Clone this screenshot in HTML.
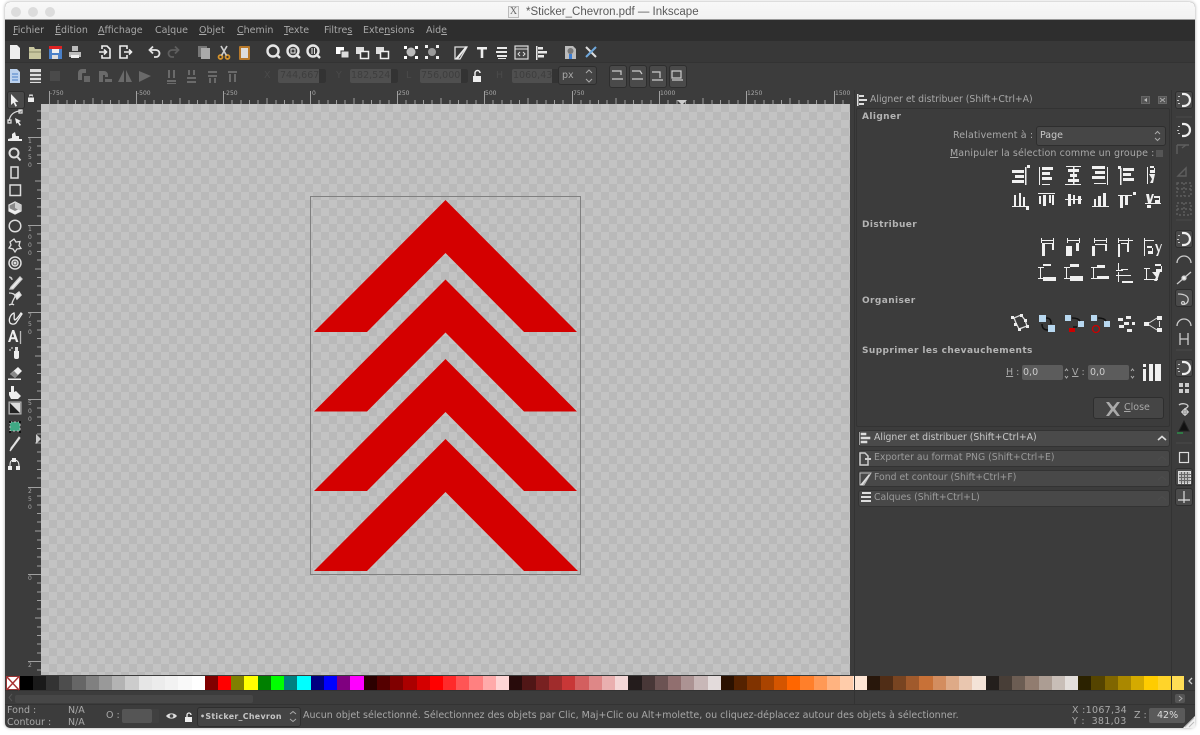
<!DOCTYPE html>
<html lang="fr"><head><meta charset="utf-8"><title>Inkscape</title>
<style>
html,body{margin:0;padding:0;width:1200px;height:735px;background:#fff;overflow:hidden}
*{box-sizing:border-box}
#w{position:absolute;left:5px;top:2px;width:1190px;height:726px;background:#3c3c3c;border-radius:5px;overflow:hidden;box-shadow:0 0 3px rgba(0,0,0,.35)}
.a{position:absolute}
.t{position:absolute;font:9.5px/12px "DejaVu Sans",sans-serif;color:#a8a8a8;white-space:nowrap;filter:blur(.25px)}
.b{font-weight:bold;font-size:9px;color:#b4b4b4;letter-spacing:.4px}
.sp{position:absolute;background:#4f4f4f;border-radius:2px}
.st{position:absolute;background:#333;border-radius:0 2px 2px 0}
.btn{position:absolute;background:#4a4a4a;border:1px solid #2e2e2e;border-radius:3px}
.tab{position:absolute;left:858px;width:312px;height:17px;background:#484848;border:1px solid #333;border-radius:3px}
.tl{font-size:9.3px}
svg{position:absolute;left:0;top:0}
#ic{filter:blur(.3px)}
#pal{position:absolute;left:19.5px;top:676px;width:1164.5px;height:14px;display:flex}
#pal i{flex:1 1 0;display:block}
</style></head><body>
<div id="w"></div>
<!-- title bar -->
<div class="a" style="left:5px;top:2px;width:1190px;height:18px;background:linear-gradient(#f8f8f8,#f2f2f2);border-radius:5px 5px 0 0;border-bottom:1px solid #999"></div>
<div class="a" style="left:11px;top:7px;width:10px;height:10px;border-radius:5px;background:#dcdcdc"></div>
<div class="a" style="left:28px;top:7px;width:10px;height:10px;border-radius:5px;background:#dcdcdc"></div>
<div class="a" style="left:45px;top:7px;width:10px;height:10px;border-radius:5px;background:#dcdcdc"></div>
<div class="a" style="left:508px;top:6px;width:11px;height:12px;background:#eee;border:1px solid #bbb;font:10px/10px 'Liberation Serif',serif;color:#666;text-align:center">X</div>
<div class="t" style="left:526px;top:6px;font:11.5px/13px 'Liberation Sans',sans-serif;color:#5a5a5a">*Sticker_Chevron.pdf — Inkscape</div>
<!-- menu -->
<div class="a" style="left:5px;top:20px;width:1190px;height:21px;background:#2e2e2e"></div>
<div class="a" style="left:5px;top:41px;width:1190px;height:21px;background:#383838"></div>
<div class="a" style="left:5px;top:62px;width:1190px;height:1px;background:#333"></div>
<div class="t" style="left:13px;top:25px"><u>F</u>ichier</div>
<div class="t" style="left:55px;top:25px"><u>É</u>dition</div>
<div class="t" style="left:98px;top:25px"><u>A</u>ffichage</div>
<div class="t" style="left:155px;top:25px">Ca<u>l</u>que</div>
<div class="t" style="left:199px;top:25px"><u>O</u>bjet</div>
<div class="t" style="left:237px;top:25px"><u>C</u>hemin</div>
<div class="t" style="left:284px;top:25px"><u>T</u>exte</div>
<div class="t" style="left:324px;top:25px">Filtre<u>s</u></div>
<div class="t" style="left:363px;top:25px">Exte<u>n</u>sions</div>
<div class="t" style="left:426px;top:25px">Aid<u>e</u></div>
<!-- tool controls -->
<div class="sp" style="left:278px;top:69px;width:48px;height:14px"></div><div class="st" style="left:319px;top:69px;width:7px;height:14px"></div>
<div class="sp" style="left:350px;top:69px;width:48px;height:14px"></div><div class="st" style="left:391px;top:69px;width:7px;height:14px"></div>
<div class="sp" style="left:420px;top:69px;width:48px;height:14px"></div><div class="st" style="left:461px;top:69px;width:7px;height:14px"></div>
<div class="sp" style="left:512px;top:69px;width:47px;height:14px"></div><div class="st" style="left:552px;top:69px;width:7px;height:14px"></div>
<div class="t" style="left:280px;top:70px;color:#3e3e3e">744,667</div>
<div class="t" style="left:351px;top:70px;color:#3e3e3e">182,524</div>
<div class="t" style="left:421px;top:70px;color:#3e3e3e">756,000</div>
<div class="t" style="left:513px;top:70px;color:#3e3e3e">1060,43</div>
<div class="t" style="left:264px;top:70px;color:#4a4a4a">X</div>
<div class="t" style="left:336px;top:70px;color:#4a4a4a">Y</div>
<div class="t" style="left:406px;top:70px;color:#4a4a4a">L</div>
<div class="t" style="left:496px;top:70px;color:#4a4a4a">H</div>
<div class="btn" style="left:558px;top:66px;width:39px;height:19px;background:#444"></div>
<div class="t" style="left:562px;top:70px">px</div>
<div class="btn" style="left:609px;top:65px;width:18px;height:23px"></div>
<div class="btn" style="left:629px;top:65px;width:18px;height:23px"></div>
<div class="btn" style="left:649px;top:65px;width:18px;height:23px"></div>
<div class="btn" style="left:669px;top:65px;width:18px;height:23px"></div>
<!-- selected tool -->
<div class="btn" style="left:7px;top:91px;width:18px;height:18px"></div>
<!-- rulers -->
<div class="a" style="left:41px;top:90px;width:809px;height:14px;background:#3c3c3c"></div>
<!-- canvas -->
<div class="a" style="left:41px;top:104px;width:809px;height:571px;background:repeating-conic-gradient(#b9b9b9 0 25%,#c3c3c3 0 50%) 0 0/16px 16px"></div>
<!-- palette -->
<div id="pal"><i style="background:#000"></i><i style="background:#1a1a1a"></i><i style="background:#333"></i><i style="background:#4d4d4d"></i><i style="background:#666"></i><i style="background:#808080"></i><i style="background:#999"></i><i style="background:#b3b3b3"></i><i style="background:#ccc"></i><i style="background:#e6e6e6"></i><i style="background:#ececec"></i><i style="background:#f2f2f2"></i><i style="background:#f9f9f9"></i><i style="background:#fff"></i><i style="background:#800000"></i><i style="background:#f00"></i><i style="background:#808000"></i><i style="background:#ff0"></i><i style="background:#008000"></i><i style="background:#0f0"></i><i style="background:#008080"></i><i style="background:#0ff"></i><i style="background:#000080"></i><i style="background:#00f"></i><i style="background:#800080"></i><i style="background:#f0f"></i><i style="background:#2b0000"></i><i style="background:#500"></i><i style="background:#800000"></i><i style="background:#a00"></i><i style="background:#d40000"></i><i style="background:#f00"></i><i style="background:#ff2a2a"></i><i style="background:#f55"></i><i style="background:#ff8080"></i><i style="background:#faa"></i><i style="background:#ffd5d5"></i><i style="background:#280b0b"></i><i style="background:#501616"></i><i style="background:#782121"></i><i style="background:#a02c2c"></i><i style="background:#c83737"></i><i style="background:#d35f5f"></i><i style="background:#de8787"></i><i style="background:#e9afaf"></i><i style="background:#f4d7d7"></i><i style="background:#241c1c"></i><i style="background:#483737"></i><i style="background:#6c5353"></i><i style="background:#916f6f"></i><i style="background:#ac9393"></i><i style="background:#c8b7b7"></i><i style="background:#e3dbdb"></i><i style="background:#2b1100"></i><i style="background:#520"></i><i style="background:#803300"></i><i style="background:#a40"></i><i style="background:#d45500"></i><i style="background:#f60"></i><i style="background:#ff7f2a"></i><i style="background:#f95"></i><i style="background:#ffb380"></i><i style="background:#fca"></i><i style="background:#ffe6d5"></i><i style="background:#28170b"></i><i style="background:#502d16"></i><i style="background:#784421"></i><i style="background:#a05a2c"></i><i style="background:#c87137"></i><i style="background:#d38d5f"></i><i style="background:#deaa87"></i><i style="background:#e9c6af"></i><i style="background:#f4e3d7"></i><i style="background:#241f1c"></i><i style="background:#483e37"></i><i style="background:#6c5d53"></i><i style="background:#917c6f"></i><i style="background:#ac9d93"></i><i style="background:#c8beb7"></i><i style="background:#e3dedb"></i><i style="background:#2b2200"></i><i style="background:#540"></i><i style="background:#806600"></i><i style="background:#a80"></i><i style="background:#d4aa00"></i><i style="background:#fc0"></i><i style="background:#ffd42a"></i><i style="background:#fd5"></i></div>
<div class="a" style="left:6px;top:676px;width:13.5px;height:14px;background:#fff"></div>
<!-- scrollbar + status -->
<div class="a" style="left:5px;top:690px;width:1190px;height:1px;background:#333"></div>
<div class="a" style="left:15px;top:695px;width:238px;height:8px;background:#474747;border-radius:2px"></div>
<div class="a" style="left:5px;top:704px;width:1190px;height:1px;background:#333"></div>
<div class="t" style="left:7px;top:705px;line-height:12px">Fond :<br>Contour :</div>
<div class="t" style="left:68px;top:705px;line-height:12px">N/A<br>N/A</div>
<div class="t" style="left:106px;top:710px">O :</div>
<div class="sp" style="left:122px;top:709px;width:30px;height:14px;background:#555"></div><div class="st" style="left:152px;top:709px;width:7px;height:14px;background:#404040"></div>
<div class="btn" style="left:197px;top:707px;width:104px;height:20px;background:#444"></div>
<div class="t b" style="left:200px;top:711px;color:#c6c6c6;font-size:7.9px;letter-spacing:.3px">•Sticker_Chevron</div>
<div class="t" style="left:303px;top:710px;letter-spacing:.012px">Aucun objet sélectionné. Sélectionnez des objets par Clic, Maj+Clic ou Alt+molette, ou cliquez-déplacez autour des objets à sélectionner.</div>
<div class="t" style="left:1072px;top:705px;letter-spacing:.3px">X :1067,34</div>
<div class="t" style="left:1072px;top:716px;letter-spacing:.3px">Y :&nbsp;&nbsp;381,03</div>
<div class="t" style="left:1134px;top:710px">Z :</div>
<div class="sp" style="left:1149px;top:708px;width:36px;height:15px;background:#5a5a5a"></div>
<div class="t" style="left:1157px;top:710px;color:#ddd">42%</div>
<!-- right dock -->
<div class="a" style="left:854px;top:90px;width:1px;height:614px;background:#333"></div>
<div class="a" style="left:1171px;top:90px;width:1px;height:614px;background:#333"></div>
<div class="a" style="left:856px;top:108px;width:314px;height:319px;border:1px solid #333;border-radius:2px"></div>
<div class="t tl" style="left:870px;top:94px">Aligner et distribuer (Shift+Ctrl+A)</div>
<div class="t b" style="left:862px;top:111px">Aligner</div>
<div class="t" style="left:953px;top:130px;letter-spacing:.12px">Relativement à :</div>
<div class="btn" style="left:1036px;top:126px;width:130px;height:20px;background:#464646"></div>
<div class="t" style="left:1040px;top:130px;color:#c8c8c8">Page</div>
<div class="t" style="left:950px;top:148px;letter-spacing:.1px"><u>M</u>anipuler la sélection comme un groupe :</div>
<div class="a" style="left:1156px;top:150px;width:7px;height:7px;background:#555"></div>
<div class="t b" style="left:862px;top:219px">Distribuer</div>
<div class="t b" style="left:862px;top:295px">Organiser</div>
<div class="t b" style="left:862px;top:345px">Supprimer les chevauchements</div>
<div class="t" style="left:1006px;top:367px"><u>H</u> :</div>
<div class="sp" style="left:1022px;top:365px;width:41px;height:15px;background:#5c5c5c"></div>
<div class="t" style="left:1023px;top:367px;color:#ccc">0,0</div>
<div class="t" style="left:1072px;top:367px"><u>V</u> :</div>
<div class="sp" style="left:1088px;top:365px;width:41px;height:15px;background:#5c5c5c"></div>
<div class="t" style="left:1090px;top:367px;color:#ccc">0,0</div>
<div class="btn" style="left:1093px;top:397px;width:71px;height:22px;background:#454545"></div>
<div class="t" style="left:1124px;top:402px"><u>C</u>lose</div>
<div class="tab" style="top:430px;background:#4a4a4a"></div>
<div class="tab" style="top:450px"></div>
<div class="tab" style="top:470px"></div>
<div class="tab" style="top:490px"></div>
<div class="t tl" style="left:874px;top:432px;color:#c8c8c8">Aligner et distribuer (Shift+Ctrl+A)</div>
<div class="t tl" style="left:874px;top:452px;color:#9a9a9a">Exporter au format PNG (Shift+Ctrl+E)</div>
<div class="t tl" style="left:874px;top:472px;color:#9a9a9a">Fond et contour (Shift+Ctrl+F)</div>
<div class="t tl" style="left:874px;top:492px;color:#9a9a9a">Calques (Shift+Ctrl+L)</div>
<div class="btn" style="left:1175px;top:91px;width:18px;height:18px"></div>
<div class="btn" style="left:1175px;top:230px;width:18px;height:18px"></div>
<div class="btn" style="left:1175px;top:289px;width:18px;height:18px"></div>
<div class="btn" style="left:1175px;top:359px;width:18px;height:18px"></div>
<div class="btn" style="left:1175px;top:468px;width:18px;height:18px"></div>
<div class="btn" style="left:1175px;top:488px;width:18px;height:18px"></div>
<!-- ruler labels -->
<div class="t" style="left:50px;top:90px;font-size:6px;line-height:8px">-750</div>
<div class="t" style="left:137px;top:90px;font-size:6px;line-height:8px">-500</div>
<div class="t" style="left:224px;top:90px;font-size:6px;line-height:8px">-250</div>
<div class="t" style="left:312px;top:90px;font-size:6px;line-height:8px">0</div>
<div class="t" style="left:398px;top:90px;font-size:6px;line-height:8px">250</div>
<div class="t" style="left:485px;top:90px;font-size:6px;line-height:8px">500</div>
<div class="t" style="left:573px;top:90px;font-size:6px;line-height:8px">750</div>
<div class="t" style="left:660px;top:90px;font-size:6px;line-height:8px">1000</div>
<div class="t" style="left:747px;top:90px;font-size:6px;line-height:8px">1250</div>
<div class="t" style="left:835px;top:90px;font-size:6px;line-height:8px">1500</div>
<div class="t" style="left:28px;top:138px;font-size:6px;line-height:8px;width:6px">1<br>2<br>5<br>0</div>
<div class="t" style="left:28px;top:226px;font-size:6px;line-height:8px;width:6px">1<br>0<br>0<br>0</div>
<div class="t" style="left:28px;top:313px;font-size:6px;line-height:8px;width:6px">7<br>5<br>0</div>
<div class="t" style="left:28px;top:400px;font-size:6px;line-height:8px;width:6px">5<br>0<br>0</div>
<div class="t" style="left:28px;top:488px;font-size:6px;line-height:8px;width:6px">2<br>5<br>0</div>
<div class="t" style="left:28px;top:575px;font-size:6px;line-height:8px;width:6px">0</div>
<div class="t" style="left:28px;top:662px;font-size:6px;line-height:8px;width:6px">2</div>

<svg width="1200" height="735" viewBox="0 0 1200 735">
<!-- document -->
<rect x="310.5" y="196.5" width="270" height="378" fill="none" stroke="#808080"/>
<g fill="#d40000">
<path d="M445.5 200L577 332H524L445.5 253L367 332H314Z"/>
<path d="M445.5 279.5L577 411.5H524L445.5 332.5L367 411.5H314Z"/>
<path d="M445.5 359L577 491H524L445.5 412L367 491H314Z"/>
<path d="M445.5 439L578 571H524L445.5 492L367 571H314Z"/>
</g>
<!-- ruler ticks -->
<g stroke="#a0a0a0" fill="none">
<path d="M49.5 91V104M136.5 91V104M223.5 91V104M310.5 91V104M397.5 91V104M484.5 91V104M572.5 91V104M659.5 91V104M746.5 91V104M834.5 91V104"/>
<path d="M58 100V104M67 100V104M75.500 100V104M84 100V104M93 98V104M102 100V104M110.500 100V104M119 100V104M128 100V104M145 100V104M154 100V104M162.500 100V104M171 100V104M180 98V104M189 100V104M197.500 100V104M206 100V104M215 100V104M232 100V104M241 100V104M249.500 100V104M258 100V104M267 98V104M276 100V104M284.500 100V104M293 100V104M302 100V104M319 100V104M328 100V104M336.500 100V104M345 100V104M354 98V104M363 100V104M371.500 100V104M380 100V104M389 100V104M406 100V104M415 100V104M423.500 100V104M432 100V104M441 98V104M450 100V104M458.500 100V104M467 100V104M476 100V104M493 100V104M502 100V104M511 100V104M519.500 100V104M528 98V104M537 100V104M546 100V104M554.500 100V104M563 100V104M581 100V104M590 100V104M598.500 100V104M607 100V104M616 98V104M625 100V104M633.500 100V104M642 100V104M651 100V104M668 100V104M677 100V104M685.500 100V104M694 100V104M703 98V104M712 100V104M720.500 100V104M729 100V104M738 100V104M755 100V104M764 100V104M773 100V104M781.500 100V104M790 98V104M799 100V104M808 100V104M816.500 100V104M825 100V104M843 100V104"/>
<path d="M28 137.500H41M28 225.500H41M28 312.500H41M28 399.500H41M28 487.500H41M28 574.500H41M28 661.500H41"/>
<path d="M37 111H41M37 120H41M37 128.500H41M37 146H41M37 155H41M37 163.500H41M35 181H41M37 190H41M37 198.500H41M37 207H41M37 216H41M37 234H41M37 243H41M37 251.500H41M37 260H41M35 269H41M37 277.500H41M37 286H41M37 295H41M37 304H41M37 321H41M37 330H41M37 338.500H41M37 347H41M35 356H41M37 365H41M37 373.500H41M37 382H41M37 391H41M37 408H41M37 417H41M37 425.500H41M37 434H41M35 443H41M37 452H41M37 461H41M37 469.500H41M37 478H41M37 496H41M37 505H41M37 513.500H41M37 522H41M35 531H41M37 540H41M37 548.500H41M37 557H41M37 566H41M37 583H41M37 592H41M37 600.500H41M37 609H41M35 618H41M37 627H41M37 635.500H41M37 644H41M37 653H41M37 670H41"/>
</g>
<path d="M677 100h10l-5 5z" fill="#ccc"/><path d="M36 434v10l5-5z" fill="#ccc"/>
<!-- no-paint swatch -->
<path d="M6.500 676.500L19 690M19 676.500L6.500 690" stroke="#a33" stroke-width="1.500"/><rect x="6.500" y="676.500" width="13" height="13" fill="none" stroke="#933"/>
<g id="ic">
<!-- top toolbar -->
<g transform="translate(7 44)"><path d="M3 1h7l3 3v11H3z" fill="#eee"/></g>
<g transform="translate(27 44)"><path d="M2 3h5l1 2h6v10H2z" fill="#c8c69f"/><path d="M2 8h12" stroke="#8a8a6a"/></g>
<g transform="translate(47 44)"><rect x="2" y="2" width="13" height="13" fill="#4a80c8"/><rect x="2" y="2" width="13" height="3" fill="#d22"/><rect x="5" y="5" width="7" height="4" fill="#eee"/><rect x="5" y="11" width="6" height="4" fill="#ddd"/></g>
<g transform="translate(67 44)"><path d="M5 2h6v5H5zM2 8h12v5H2z" fill="#bbb"/><rect x="4" y="11" width="8" height="3" fill="#eee"/></g>
<g transform="translate(97 44)" fill="none" stroke="#eee" stroke-width="1.600"><path d="M5 5V2h5l3 3v9H5v-3"/><path d="M2 8h7M7 5.500L9.500 8L7 10.500"/></g>
<g transform="translate(117 44)" fill="none" stroke="#eee" stroke-width="1.600"><path d="M10 5V2H3v12h7v-3"/><path d="M7 8h7M12 5.500L14.500 8L12 10.500"/></g>
<g transform="translate(146 44)" fill="none" stroke="#e4e4e4" stroke-width="1.800"><path d="M4 6h6a3 3 0 0 1 0 7H8"/><path d="M7 2.500L3.500 6L7 9.500"/></g>
<g transform="translate(166 44)" fill="none" stroke="#5e5e5e" stroke-width="1.800"><path d="M12 6H6a3 3 0 0 0 0 7h2"/><path d="M9 2.500L12.500 6L9 9.500"/></g>
<g transform="translate(196 44)"><rect x="2" y="2" width="9" height="11" fill="#777"/><rect x="5" y="4" width="9" height="11" fill="#aaa"/></g>
<g transform="translate(216 44)" stroke="#d8952c" fill="none" stroke-width="1.700"><circle cx="4.500" cy="13" r="2"/><circle cx="11.500" cy="13" r="2"/><path d="M5.500 11.500L11 2M10.500 11.500L5 2" stroke="#ccc"/></g>
<g transform="translate(236 44)"><rect x="3" y="2" width="11" height="14" rx="1" fill="#b8792a"/><rect x="5" y="4" width="7" height="10" fill="#ddd"/></g>
<g fill="none" stroke="#e6e6e6" stroke-width="2.400">
<g transform="translate(265 44)"><circle cx="8" cy="7" r="5.500"/><path d="M12 11l3 3"/></g>
<g transform="translate(285 44)"><circle cx="8" cy="7" r="5.500"/><path d="M12 11l3 3"/><rect x="6" y="5" width="4" height="4" stroke-width="1"/></g>
<g transform="translate(305 44)"><circle cx="8" cy="7" r="5.500"/><path d="M12 11l3 3"/><path d="M7 4v6M9.500 4v6" stroke-width="1"/></g>
</g>
<g transform="translate(334 44)"><rect x="2" y="3" width="8" height="7" fill="#fff"/><rect x="7" y="7" width="8" height="7" fill="#ddd" stroke="#333"/></g>
<g transform="translate(354 44)"><rect x="2" y="3" width="8" height="7" fill="#ddd"/><rect x="6.500" y="7.500" width="8" height="7" fill="#333" stroke="#eee" stroke-width="1.500"/></g>
<g transform="translate(374 44)"><rect x="2" y="3" width="8" height="7" fill="#ddd"/><rect x="6.500" y="7.500" width="8" height="7" fill="#333" stroke="#eee" stroke-width="1.500"/></g>
<g transform="translate(403 44)"><circle cx="8" cy="8" r="4.500" fill="#bbb"/><path d="M1 2h3v3H1zM12 2h3v3h-3zM1 12h3v3H1zM12 12h3v3h-3z" fill="#fff"/></g>
<g transform="translate(424 44)"><circle cx="8" cy="8" r="4" fill="#999"/><path d="M1 1h3v3H1zM12 1h3v3h-3zM1 12h3v3H1zM12 12h3v3h-3z" fill="#eee"/></g>
<g transform="translate(453 44)"><path d="M2 3h12L7 15H2z" fill="none" stroke="#ddd" stroke-width="1.300"/><path d="M2 15L13 2l1 1L5 15z" fill="#eee"/></g>
<path d="M477 47h10v2.500h-3.700V58h-2.600v-8.500H477z" fill="#eee"/>
<path d="M497 47h10v2H497zM496 51h11v2h-11zM497 55h10v2H497zM498 58h8v1h-8z" fill="#e8e8e8"/>
<g transform="translate(513 44)"><rect x="2" y="2" width="13" height="13" fill="#444" stroke="#ddd" stroke-width="1.200"/><path d="M2 5h13" stroke="#ddd"/><path d="M7 8l-2 2 2 2M10 8l2 2-2 2" stroke="#ddd" fill="none"/></g>
<path d="M536 46h1.500v14H536zM538 47h5v2.500h-5zM538 51h9v2.500h-9zM538 55h6v2.500h-6z" fill="#e8e8e8"/>
<g transform="translate(563 44)"><path d="M2 2h8l3 3v10H2z" fill="#bbb"/><circle cx="7.500" cy="7" r="3" fill="#777"/><path d="M6 10h3v5H6z" fill="#3a7bd0"/></g>
<g transform="translate(583 44)" stroke="#ddd" stroke-width="2"><path d="M3 3l10 10"/><path d="M13 3L3 13" stroke="#6fa8dc"/></g>
<!-- tool controls icons -->
<g transform="translate(7 68)"><path d="M3 1h7l3 3v11H3z" fill="#bcd2ee"/><path d="M5 6h6M5 9h6M5 12h6" stroke="#4a80c8"/></g>
<g transform="translate(27 68)"><rect x="3" y="1" width="11" height="14" fill="#ddd"/><path d="M3 5h11M3 9h11M3 13h11" stroke="#333" stroke-width="1.500"/></g>
<rect x="50" y="71" width="10" height="10" fill="#4a4a4a"/>
<g fill="#6a6a6a">
<path d="M78 80v-7a4 4 0 0 1 4-4h4v4h-3a1 1 0 0 0-1 1v6z"/><rect x="84" y="76" width="6" height="6" fill="#666"/>
<path d="M99 71h5a4 4 0 0 1 4 4v2h-3v-2h-6z"/><rect x="99" y="74" width="4" height="8"/><rect x="105" y="79" width="7" height="3"/>
<path d="M124 70v12h-6zM126 70v12h6z"/>
<path d="M139 71l12 5-12 6z"/>
<path d="M168 70h2v8h-2zM173 70h2v8h-2zM167 80h9v2h-9zM167 83h9v1h-9z"/>
<path d="M188 70h2v5h-2zM193 70h2v5h-2zM187 77h9v2h-9zM187 81h9v2h-9z"/>
<path d="M208 71h9v2h-9zM208 75h9v2h-9zM209 78h2v5h-2zM214 78h2v5h-2z"/>
<path d="M228 71h9v2h-9zM229 74h2v8h-2zM234 74h2v8h-2z"/>
</g>
<path d="M473 76h8v6h-8z" fill="#eee"/><path d="M475 76v-3a2.500 2.500 0 0 1 5 0" fill="none" stroke="#eee" stroke-width="1.500"/>
<path d="M586 73l3-3 3 3M586 79l3 3 3-3" fill="none" stroke="#aaa"/>
<g fill="none" stroke="#ccc" stroke-width="1.200"><path d="M612 71h9v4M612 79h11"/><path d="M632 71h8l2 3M632 79h11"/><path d="M652 72h8v6M652 80h11"/><path d="M672 71h9v7h-9zM672 80h11"/></g>
<!-- left toolbox -->
<path d="M11 94v11l2.500-2.300 2 4 1.500-.8-2-4h3.500z" fill="#eee"/>
<path d="M31 94.500h-1.800v3a1.800 1.800 0 0 1 3.600 0v-3zM28 97.500h6v4.500h-6z" fill="#eee"/>
<g fill="none" stroke="#ddd" stroke-width="1.300">
<g transform="translate(7 109)"><path d="M2 12C3 6 7 2 14 2"/><rect x="1" y="11" width="3" height="3"/><rect x="12" y="1" width="3" height="3"/></g><path d="M15 118l6 3-2 1 2 3-1.500.800-1.700-3-1.500 1z" fill="#eee" stroke="none"/>
<path d="M8 141h14v-2h-3v-3h-3l-1-4-3 2v4l-4 1z" fill="#eee" stroke="none"/>
<g stroke-width="2"><circle cx="14" cy="153" r="4.500"/><path d="M17.500 157l3 3.500"/></g>
<rect x="11" y="167" width="7" height="11" stroke-width="1.500"/>
<rect x="10" y="185" width="10.500" height="10.500" stroke-width="1.500"/>
<path d="M15 202l6 3v6l-6 3-6-3v-6z" fill="#888"/><path d="M9 208l6 3 6-3v3l-6 3-6-3z" fill="#eee" stroke="none"/><path d="M15 202l6 3v6l-6-3z" fill="#ccc" stroke="none"/>
<circle cx="15" cy="226" r="5.800" stroke-width="1.500"/>
<path d="M14 239l2 3 4-.5-1 4 2 3-4 .5-2 3-2-3-4-1 2-3-1-3z" stroke-width="1.300"/>
<g stroke-width="1.500"><circle cx="15" cy="263" r="6"/><circle cx="15" cy="263" r="3"/><circle cx="15" cy="263" r=".8"/></g>
<path d="M9 277c2 0 3 1 3 3M10 289l1-2 9-10 2 2-9 10z" fill="#eee" stroke="#ccc"/>
<path d="M9 293c3 0 6 1 6 3s-3 5-3 8M9 305c2-1 4-1 5 0M15 295l4-3 2 3-4 4z" fill="none" stroke="#ddd"/><path d="M15 295l4-3 2 3-4 4z" fill="#eee"/>
<path d="M10 323c-2-4 1-9 4-10 1 3-1 6 1 7 2-1 4-4 6-7l1 1-6 9c-2 2-5 1-6 0z" stroke="#eee" stroke-width="1.300"/>
<path d="M20.500 331v13" stroke="#bbb"/>
</g>
<path d="M8 342l4.200-12h2l4.200 12h-2.400l-.9-2.800h-3.900l-.9 2.800zM11.500 337.300h2.700l-1.350-4.200z" fill="#eee"/>
<path d="M14 351h5v6a2 2 0 0 1-2 2h-1a2 2 0 0 1-2-2z" fill="#eee"/><path d="M15 347h3v4h-3z" fill="#ddd"/><circle cx="10" cy="350" r="1" fill="#aaa"/><circle cx="12" cy="348" r="1" fill="#aaa"/>
<path d="M10 374l8-7 4 4-7 7zM8 380h13v-1.500H8z" fill="#eee"/><path d="M10 374l4-3 4 4-3 3z" fill="#888"/>
<path d="M11 386v6h-2v3l2 4h7l3-3-5-5-2 1v-6z" fill="#eee"/>
<rect x="9" y="402" width="12" height="12" fill="#777" stroke="#bbb"/><path d="M10 403l10 10H10z" fill="#222"/><path d="M10 403h10v10z" fill="#ddd"/>
<rect x="10" y="422" width="10" height="9" fill="#3fa884" stroke="#bbb" stroke-dasharray="2 2"/><path d="M9 421h2v2H9zM19 421h2v2h-2zM9 431h2v2H9zM19 431h2v2h-2z" fill="#111"/>
<path d="M20 438l-6 8-3 4-1 1 1-3 3-4 5-7z" fill="#eee" stroke="#ddd"/>
<path d="M12 458h4v4h-4zM8 466h4v4H8zM16 466h4v4h-4z" fill="#eee"/><path d="M14 460c-4 0-4 3-4 6M14 460c4 0 5 3 5 6" fill="none" stroke="#eee"/>
<!-- status -->
<path d="M166 716c2.500-3.500 8.500-3.500 11 0-2.500 3.500-8.500 3.500-11 0z" fill="#ddd"/><circle cx="171.500" cy="716" r="1.800" fill="#444"/>
<path d="M185 717h7v5h-7z" fill="#eee"/><path d="M187 717v-2a2 2 0 0 1 4 0" fill="none" stroke="#eee" stroke-width="1.300"/>
<path d="M290 714l3-2.500 3 2.500M290 719l3 2.500 3-2.500" fill="none" stroke="#aaa"/>
<path d="M1183 728l12-12v12z" fill="#f2f2f2"/><path d="M1185 727l9-9M1189 727l5-5" stroke="#bbb"/>
<path d="M12 694l-3 3.500 3 3.500" fill="none" stroke="#555"/><rect x="1175" y="694" width="10" height="9" rx="2" fill="#555"/><path d="M1179 696l3 2.500-3 2.500" fill="none" stroke="#aaa"/>
<path d="M1192 678l-3 3 3 3" fill="none" stroke="#ccc" stroke-width="1.300"/>
<!-- dock title icons -->
<path d="M857 94h1.500v12H857zM859 95h5v2h-5zM859 99h8v2h-8zM859 103h5v2h-5z" fill="#ddd"/>
<rect x="1141.500" y="96.500" width="8" height="7" fill="#555" stroke="#666"/><path d="M1147 98v4l-3-2z" fill="#bbb"/>
<rect x="1158.500" y="96.500" width="8" height="7" fill="#555" stroke="#666"/><path d="M1160 98l5 4M1165 98l-5 4" stroke="#aaa"/>
<!-- align -->
<g fill="#f0f0f0">
<path d="M1012 170h12v3h-12zM1015 175h9v3h-9zM1012 180h12v3h-12zM1025 167h1.500v18H1025zM1027 165h3v3h-3z"/>
<path d="M1039 167h1v18h-1zM1042 167h11v3h-11zM1042 172h8v3h-8zM1042 177h10v3h-10zM1042 184h8v1h-8z"/>
<path d="M1066 166h15v1h-15zM1068 169h11v3h-11zM1070 174h7v3h-7zM1068 179h11v3h-11zM1073 166h1.500v18H1073zM1065 184h16v1h-16z"/>
<path d="M1092 166h13v3h-13zM1095 171h10v3h-10zM1092 176h13v3h-13zM1107 167h1v18h-1zM1094 183h12v1h-12z"/>
<path d="M1118 166h3v3h-3zM1120 168h1.500v17H1120zM1123 168h11v3h-11zM1123 173h8v3h-8zM1123 178h11v3h-11z"/>
<path d="M1147 167h1v17h-1zM1150 166h4v2h-4zM1154 168h1v5h-5v-3h4zM1149 174h6l-2 9h-3l2-4z"/>
<!-- row 2 -->
<path d="M1012 206h17v1h-17zM1014 195h2v11h-2zM1019 193h2v13h-2zM1023 197h2v9h-2zM1026 207h3v3h-3z"/>
<path d="M1038 193h17v1h-17zM1043 195h3v11h-3zM1049 195h2v8h-2zM1052 195h2v10h-2zM1039 196h2v8h-2z"/>
<path d="M1065 199h17v1h-17zM1068 194h3v12h-3zM1073 195h2v9h-2zM1078 196h3v8h-3z"/>
<path d="M1092 206h17v1h-17zM1098 196h3v10h-3zM1103 193h3v13h-3zM1094 199h2v7h-2z"/>
<path d="M1118 195h14v1h-14zM1120 196h3v12h-3zM1125 196h3v9h-3zM1133 192h3v3h-3z"/>
<path d="M1145 203h16v1h-16zM1147 205h4v3h-4zM1146 194h3l1 6 2-6h2l-3 9h-3zM1154 196h6v7h-5v-3h4v-2h-5z"/>
<!-- distribute 1 -->
<path d="M1041 240h12v1h-12zM1041 238h1v5h-1zM1053 238h1v5h-1zM1042 243h3v13h-3zM1052 243h2v7h-2zM1045 243h8v1h-8z"/>
<path d="M1067 240h12v1h-12zM1067 238h1v5h-1zM1079 238h1v5h-1zM1066 246h6v10h-6zM1076 243h3v8h-3z"/>
<path d="M1094 240h12v1h-12zM1094 238h1v5h-1zM1106 238h1v5h-1zM1092 246h3v10h-3zM1095 244h11v1h-11zM1105 244h2v7h-2z"/>
<path d="M1118 240h15v1h-15zM1118 238h1v5h-1zM1128 238h1v5h-1zM1118 244h2v13h-2zM1121 243h7v1h-7zM1127 243h2v9h-2z"/>
<path d="M1144 240h10v1h-10zM1144 238h1v18h-1zM1147 246h5v2h-5zM1152 248h1v6h-5v-3h4zM1155 244h2l2 6 2-6h1l-4 12h-2l2-4z"/>
<!-- distribute 2 -->
<path d="M1038 267h6v1h-6zM1040 268h1v10h-1zM1038 278h6v1h-6zM1043 264h8v2h-8zM1043 277h13v4h-13z"/>
<path d="M1064 267h6v1h-6zM1066 268h1v10h-1zM1064 278h6v1h-6zM1070 264h9v3h-9zM1070 276h13v5h-13z"/>
<path d="M1091 267h6v1h-6zM1093 268h1v10h-1zM1091 278h6v1h-6zM1097 265h8v3h-8zM1097 276h12v3h-12z"/>
<path d="M1118 263h1v8h-1zM1116 270h7v1h-7zM1118 272h1v10h-1zM1116 275h15v1h-15zM1121 269h7v1h-7zM1122 281h11v2h-11z"/>
<path d="M1144 268h6v1h-6zM1146 269h1v10h-1zM1144 279h14v1h-14zM1155 264h6v2h-6zM1161 266h1v6h-6v-3h5zM1152 272h8l-3 9h-3l2-4z"/>
</g>
<!-- arrange -->
<g fill="none" stroke="#ddd" stroke-width="1.300"><path d="M1014 318l7-3 4 5 2 6-8 3-3-6z"/></g>
<path d="M1011 316h3v3h-3zM1020 314h3v3h-3zM1024 319h3v3h-3zM1026 325h3v3h-3zM1018 328h3v3h-3zM1014 323h3v3h-3z" fill="#eee"/>
<g><rect x="1039" y="315" width="7" height="7" fill="#b8d8f0"/><rect x="1048" y="325" width="7" height="7" fill="#b8d8f0"/><path d="M1046 318c5 0 5 3 5 6M1048 330c-5 0-6-3-6-6" fill="none" stroke="#111" stroke-width="1.500"/></g>
<g><rect x="1065" y="315" width="6" height="6" fill="#b8d8f0"/><rect x="1078" y="321" width="6" height="6" fill="#b8d8f0"/><path d="M1072 318c5 0 7 1 8 3M1077 327h-4" fill="none" stroke="#111" stroke-width="1.500"/><path d="M1069 328h6v4h-6z" fill="#c00"/></g>
<g><rect x="1091" y="315" width="6" height="6" fill="#b8d8f0"/><rect x="1104" y="321" width="6" height="6" fill="#b8d8f0"/><path d="M1098 318c5 0 7 1 8 3" fill="none" stroke="#111" stroke-width="1.500"/><circle cx="1096" cy="329" r="3.500" fill="none" stroke="#c00" stroke-width="1.300"/></g>
<path d="M1118 318h5v3h-5zM1126 316h5v3h-5zM1124 322h5v3h-5zM1132 322h3v3h-3zM1119 325h5v3h-5zM1127 329h5v3h-5z" fill="#eee"/>
<path d="M1144 322h5v4h-5zM1157 316h5v4h-5zM1157 328h5v4h-5z" fill="#eee"/><path d="M1149 323l8-5M1149 325l8 5M1159.500 321v6" stroke="#ddd" fill="none"/>
<!-- remove overlap -->
<path d="M1143 369h3v12h-3zM1143 364h3v3h-3zM1149 364h4v17h-4zM1155 364h6v17h-6z" fill="#f0f0f0"/>
<path d="M1109 403l3 0 4 5 4-5h3l-5 7 5 7h-3l-4-5-4 5h-3l5-7z" fill="#aaa" transform="translate(-3 -1)"/>
<!-- tabs icons -->
<path d="M859.500 432v13M861 433h5v2h-5zM861 437h9v2h-9zM861 441h6v2h-6z" stroke="#ddd" fill="#ddd" stroke-width=".6"/>
<path d="M860 453h5l3 3v9h-8z" fill="none" stroke="#ccc" stroke-width="1.500"/><path d="M865 459h6" stroke="#ccc" stroke-width="2"/>
<path d="M860 473h11l-7 12h-4z" fill="none" stroke="#bbb"/><path d="M860 485l9-11 1 1-7 10z" fill="#ddd"/>
<path d="M862 492h9v2h-9zM861 496h10v2h-10zM861 500h10v2h-10z" fill="#ddd"/>
<path d="M1158 440l4-3.500 4 3.500" fill="none" stroke="#ddd" stroke-width="1.600"/>
<path d="M1158 460l4-3.500 4 3.500M1158 480l4-3.500 4 3.500M1158 500l4-3.500 4 3.500" fill="none" stroke="#4c4c4c" stroke-width="1.400"/>
<path d="M1155 134l2.500-2.500 2.500 2.500M1155 138l2.500 2.500 2.500-2.500" fill="none" stroke="#aaa"/>
<path d="M1065 371l1.500-2 1.500 2M1065 376l1.500 2 1.500-2M1131 371l1.500-2 1.500 2M1131 376l1.500 2 1.500-2" fill="none" stroke="#aaa"/>
</g>
<!-- snap rail -->
<g fill="none" stroke="#eee" stroke-width="2.200" style="filter:blur(.3px)">
<path d="M1182 94h2a6 6 0 0 1 0 12h-2"/><path d="M1182 124h2a6 6 0 0 1 0 12h-2"/><path d="M1182 233h2a6 6 0 0 1 0 12h-2"/><path d="M1182 362h2a6 6 0 0 1 0 12h-2"/>
<path d="M1179 96v1M1178 100v1M1179 103v1M1179 126v1M1178 130v1M1179 133v1M1179 235v1M1178 239v1M1179 242v1M1179 364v1M1178 368v1M1179 371v1" stroke-width="1.500"/>
<g stroke="#5e5e5e" stroke-width="1.400"><path d="M1177 145h12M1177 145v9M1182 148l4-3"/><path d="M1178 176l8-8v8z"/><path d="M1177 183h14v13h-14zM1184 183v13M1177 189h14" stroke-dasharray="2 2"/><path d="M1177 203h14v12h-14zM1184 203v12M1177 209h14" stroke-dasharray="2 2"/></g>
<g stroke="#ccc" stroke-width="1.300"><path d="M1177 263a7 7 0 0 1 14 0"/><path d="M1177 284l14-12"/><circle cx="1184" cy="278" r="2" fill="#eee"/><path d="M1178 294c8 0 11 3 10 7-1 3-4 4-6 3"/><circle cx="1183" cy="303" r="1.500"/><path d="M1177 326a7 7 0 0 1 14 0"/><path d="M1180 333v12M1188 333v12M1180 339h8"/></g>
<path d="M1179 383h4v4h-4zM1185 383h4v4h-4zM1179 389h4v4h-4zM1185 389h4v4h-4z" fill="#ccc" stroke="none"/>
<g stroke="#ccc" stroke-width="1.300"><path d="M1179 405a5 3 0 0 1 9 1c0 2-3 2-4 4"/><circle cx="1185" cy="412" r="2.500"/><path d="M1181 412h8M1185 408v8"/></g>
<path d="M1184 421l5 10h-10z" fill="#111" stroke="#222" stroke-width="1"/><path d="M1177 433h6" stroke="#2a9a4a" stroke-width="1.300"/>
<rect x="1179.500" y="452.500" width="9" height="10" stroke="#ddd" stroke-width="1.200"/>
<g stroke="#ddd" stroke-width="1"><rect x="1178.500" y="471.500" width="12" height="12" fill="#bbb"/><path d="M1181.500 472v12M1184.500 472v12M1187.500 472v12M1179 474.500h12M1179 477.500h12M1179 480.500h12" stroke="#666"/></g>
<path d="M1184 491v12M1178 500h12" stroke="#ddd" stroke-width="1.200"/>
<path d="M1176 117h16M1176 220h16M1176 350h16M1176 443h16" stroke="#4a4a4a" stroke-width="1"/>
</g>
</svg>
</body></html>
